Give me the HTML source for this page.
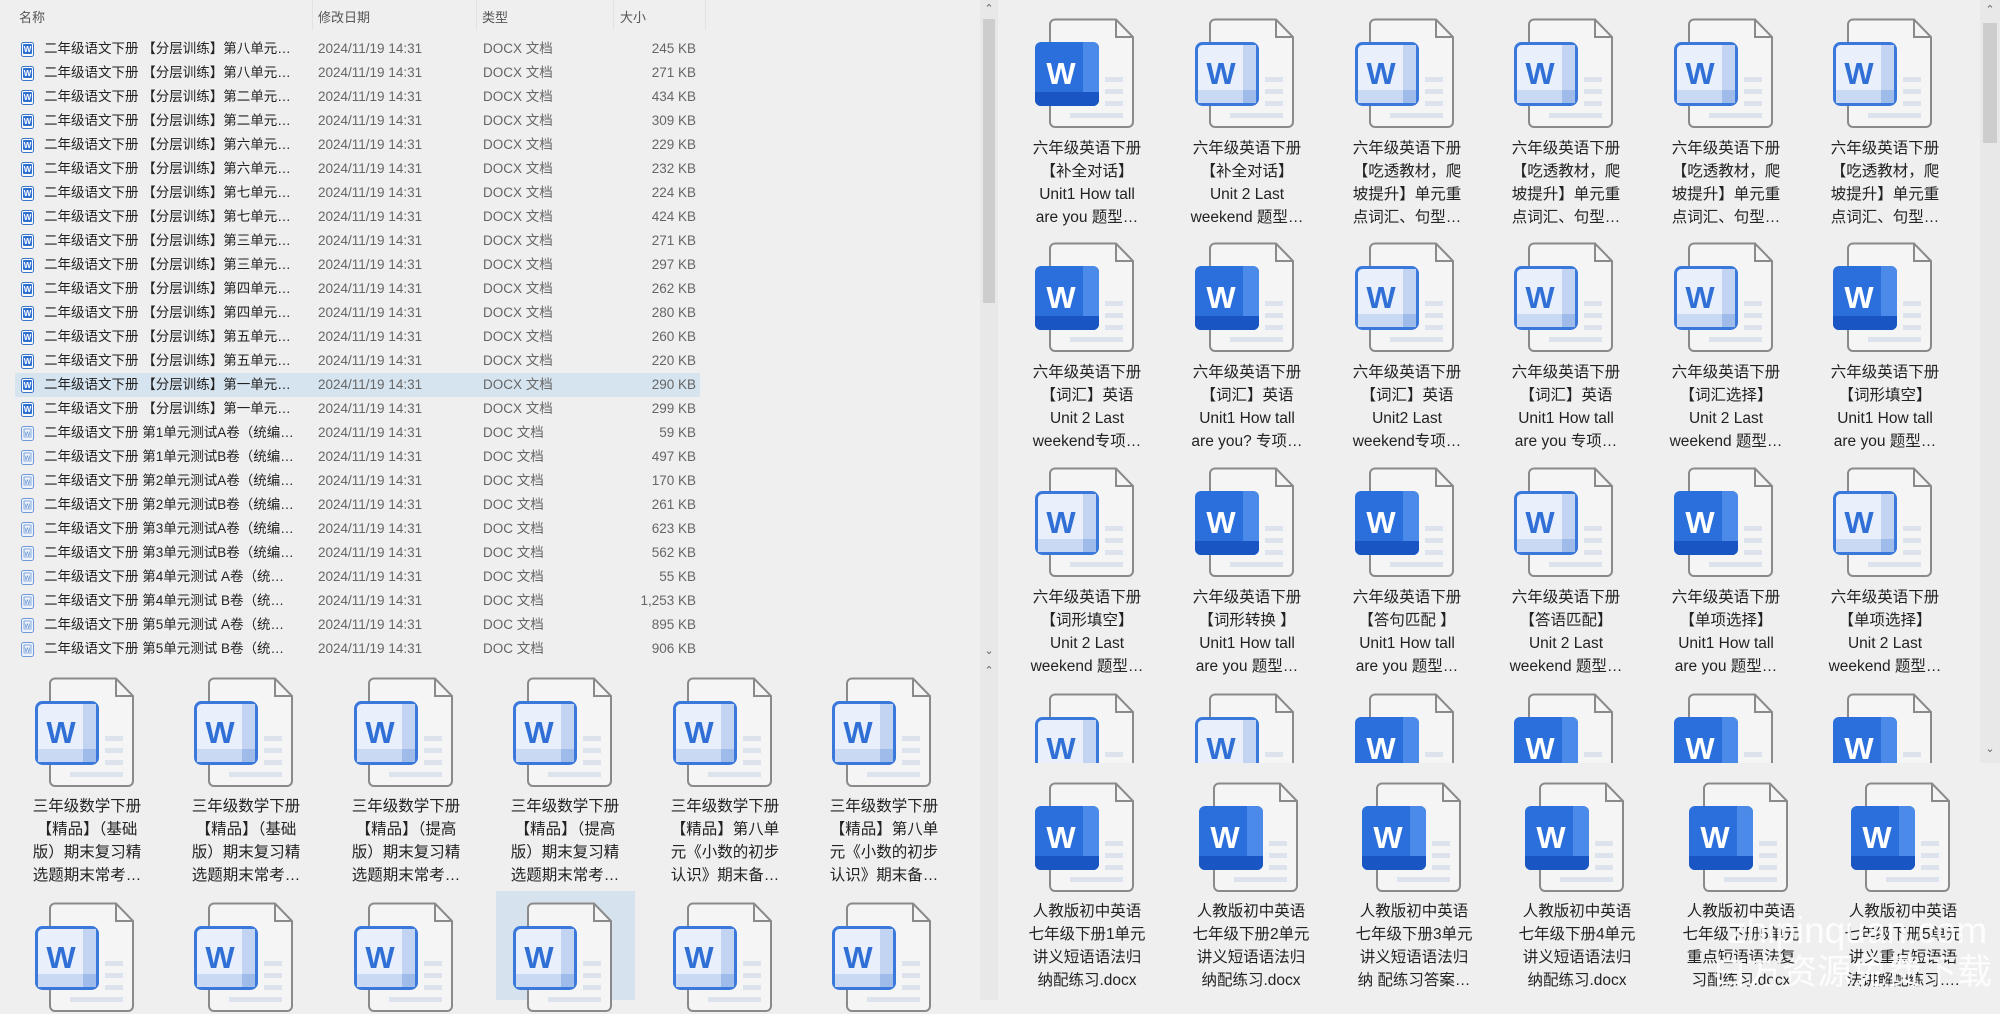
<!DOCTYPE html>
<html><head><meta charset="utf-8">
<style>
*{margin:0;padding:0;box-sizing:border-box}
body{width:2000px;height:1000px;background:#efefef;position:relative;overflow:hidden;font-family:"Liberation Sans","Noto Sans CJK SC",sans-serif}
.a{position:absolute;white-space:nowrap}
.hd{font-size:13px;color:#555;top:7px}
.sep{position:absolute;top:0;width:1px;height:30px;background:#e2e2e2}
.row{position:absolute;left:0;height:24px;font-size:13.5px;line-height:24px}
.row span{position:absolute;white-space:nowrap}
.nm{left:44px;color:#222}
.dt{left:318px;color:#666}
.tp{left:483px;color:#666}
.sz{color:#666;text-align:right;width:80px;left:616px}
.si{position:absolute;left:21px;top:5px;width:13px;height:15px}
.lbl{position:absolute;width:140px;text-align:center;font-size:15.5px;line-height:23px;color:#222;white-space:nowrap}
.ic{position:absolute;width:100px;height:112px}
.sb{position:absolute;background:#e8e8e8}
.th{position:absolute;background:#cdcdcd}
.ar{position:absolute;font-size:11px;color:#666;width:18px;text-align:center}
</style></head><body>
<div id="root"></div>
<div class="sb" style="left:980px;top:0;width:18px;height:660px"></div>
<div class="th" style="left:983px;top:19px;width:12px;height:284px"></div>
<div class="ar" style="left:980px;top:2px">&#8963;</div>
<div class="ar" style="left:980px;top:644px">&#8964;</div>
<div class="sb" style="left:980px;top:660px;width:18px;height:340px"></div>
<div class="ar" style="left:980px;top:664px">&#8963;</div>
<div class="sb" style="left:1980px;top:0;width:20px;height:763px"></div>
<div class="th" style="left:1983px;top:23px;width:14px;height:120px"></div>
<div class="ar" style="left:1981px;top:3px">&#8963;</div>
<div class="ar" style="left:1981px;top:742px">&#8964;</div>
<div class="a" style="left:1728px;top:910px;font-size:37px;color:rgba(255,255,255,.88)">zhipinquan.com</div>
<div class="a" style="left:1712px;top:953px;font-size:35px;line-height:40px;color:rgba(255,255,255,.88)">白方资源免费下载</div>
<script>
const R=document.getElementById('root');let h='';
h+='<div class="a hd" style="left:19px">名称</div><div class="a" style="left:157px;top:-6px;font-size:12px;color:#888">&#8963;</div>';
h+='<div class="a hd" style="left:318px">修改日期</div><div class="a hd" style="left:482px">类型</div><div class="a hd" style="left:620px">大小</div>';
[312,476,613,705].forEach(x=>h+='<div class="sep" style="left:'+x+'px"></div>');
const u=['第八单元…','第八单元…','第二单元…','第二单元…','第六单元…','第六单元…','第七单元…','第七单元…','第三单元…','第三单元…','第四单元…','第四单元…','第五单元…','第五单元…','第一单元…','第一单元…'];
const s1=[245,271,434,309,229,232,224,424,271,297,262,280,260,220,290,299];
const d=['第1单元测试A卷（统编…','第1单元测试B卷（统编…','第2单元测试A卷（统编…','第2单元测试B卷（统编…','第3单元测试A卷（统编…','第3单元测试B卷（统编…','第4单元测试 A卷（统…','第4单元测试 B卷（统…','第5单元测试 A卷（统…','第5单元测试 B卷（统…'];
const s2=['59','497','170','261','623','562','55','1,253','895','906'];
for(let i=0;i<26;i++){
 const y=37+i*24;const docx=i<16;
 const nm=docx?'二年级语文下册 【分层训练】'+u[i]:'二年级语文下册 '+d[i-16];
 const sz=(docx?s1[i]:s2[i-16])+' KB';
 const ic=docx?'<svg class="si" viewBox="0 0 13 15"><rect x="0.5" y="0.5" width="12" height="14" rx="2" fill="#fff" stroke="#3a74c9"/><rect x="2" y="2" width="9" height="10" rx="1" fill="#2f6fd0"/><text x="6.5" y="10" font-size="8" font-weight="bold" fill="#fff" text-anchor="middle" font-family="Liberation Sans">W</text></svg>'
 :'<svg class="si" viewBox="0 0 13 15"><rect x="0.5" y="0.5" width="12" height="14" rx="2" fill="#eef3fb" stroke="#6f9ad8"/><rect x="3" y="3" width="7" height="8" fill="none" stroke="#6f9ad8" stroke-width=".8"/><text x="6.5" y="10" font-size="6" fill="#3a74c9" text-anchor="middle" font-family="Liberation Sans">W</text></svg>';
 if(i==14)h+='<div style="position:absolute;left:15px;top:'+y+'px;width:685px;height:24px;background:#d6e4f0"></div>';
 h+='<div class="row" style="top:'+y+'px;width:700px">'+ic+'<span class="nm">'+nm+'</span><span class="dt">2024/11/19 14:31</span><span class="tp">'+(docx?'DOCX 文档':'DOC 文档')+'</span><span class="sz">'+sz+'</span></div>';
}
function icon(cx,top,solid,clip){
 let s='<svg class="ic" style="left:'+(cx-52)+'px;top:'+top+'px'+(clip?';height:'+clip+'px':'')+'" viewBox="0 0 100 '+(clip||112)+'" preserveAspectRatio="xMinYMin slice">';
 s+='<path d="M20 1.5 H81 L98 19 V104 a5 5 0 0 1 -5 5 H20 a5 5 0 0 1 -5 -5 V6.5 a5 5 0 0 1 5 -5Z" fill="#f5f5f5" stroke="#8a8a8a" stroke-width="2"/><path d="M81 1.5 V19 H98" fill="none" stroke="#8a8a8a" stroke-width="2"/>';
 s+='<rect x="70" y="59" width="18" height="5" fill="#dde3ec"/><rect x="70" y="71" width="18" height="5" fill="#dde3ec"/><rect x="70" y="83" width="18" height="5" fill="#dde3ec"/><rect x="35" y="95" width="53" height="5" fill="#dde3ec"/>';
 if(solid){
  s+='<rect x="0" y="24" width="64" height="64" rx="6" fill="#2a6fdb"/><path d="M48 24 H58 a6 6 0 0 1 6 6 V82 a6 6 0 0 1 -6 6 H48Z" fill="#4b8ae8"/><path d="M0 74 H64 V82 a6 6 0 0 1 -6 6 H6 a6 6 0 0 1 -6 -6Z" fill="#1a55c4"/><text x="26" y="66" font-size="31" font-weight="bold" fill="#fff" text-anchor="middle" font-family="Liberation Sans">W</text>';
 }else{
  s+='<rect x="1.5" y="25.5" width="61" height="61" rx="6" fill="#eaf0fb" stroke="#3a78dc" stroke-width="3"/><rect x="48" y="27" width="13" height="58" fill="#c3d4f2"/><rect x="3" y="72" width="58" height="13" fill="#c9d8f3"/><rect x="48" y="72" width="13" height="13" fill="#9fbbe9"/><text x="26" y="66" font-size="31" font-weight="bold" fill="#2f6fd6" text-anchor="middle" font-family="Liberation Sans">W</text>';
 }
 return s+'</svg>';
}
function lbl(cx,top,lines){let s='<div class="lbl" style="left:'+(cx-70)+'px;top:'+top+'px">';lines.forEach(l=>s+='<div>'+l+'</div>');return s+'</div>';}
const lc=[87,246,406,565,725,884];
h+='<div style="position:absolute;left:496px;top:891px;width:139px;height:109px;background:#d6e2ee"></div>';
const LL=[['三年级数学下册','【精品】（基础','版）期末复习精','选题期末常考…'],['三年级数学下册','【精品】（基础','版）期末复习精','选题期末常考…'],['三年级数学下册','【精品】（提高','版）期末复习精','选题期末常考…'],['三年级数学下册','【精品】（提高','版）期末复习精','选题期末常考…'],['三年级数学下册','【精品】第八单','元《小数的初步','认识》期末备…'],['三年级数学下册','【精品】第八单','元《小数的初步','认识》期末备…']];
lc.forEach((c,i)=>{h+=icon(c,677,false)+lbl(c,795,LL[i])+icon(c,902,false);});
const rc=[1087,1247,1407,1566,1726,1885];
const st=[[1,0,0,0,0,0],[1,1,0,0,0,1],[0,1,1,0,1,0],[0,0,1,1,1,1]];
const tops=[18,242,467,693];
const RL=[
[['六年级英语下册','【补全对话】','Unit1 How tall','are you 题型…'],['六年级英语下册','【补全对话】','Unit 2 Last','weekend 题型…'],['六年级英语下册','【吃透教材，爬','坡提升】单元重','点词汇、句型…'],['六年级英语下册','【吃透教材，爬','坡提升】单元重','点词汇、句型…'],['六年级英语下册','【吃透教材，爬','坡提升】单元重','点词汇、句型…'],['六年级英语下册','【吃透教材，爬','坡提升】单元重','点词汇、句型…']],
[['六年级英语下册','【词汇】英语','Unit 2 Last','weekend专项…'],['六年级英语下册','【词汇】英语','Unit1 How tall','are you? 专项…'],['六年级英语下册','【词汇】英语','Unit2 Last','weekend专项…'],['六年级英语下册','【词汇】英语','Unit1 How tall','are you 专项…'],['六年级英语下册','【词汇选择】','Unit 2 Last','weekend 题型…'],['六年级英语下册','【词形填空】','Unit1 How tall','are you 题型…']],
[['六年级英语下册','【词形填空】','Unit 2 Last','weekend 题型…'],['六年级英语下册','【词形转换 】','Unit1 How tall','are you 题型…'],['六年级英语下册','【答句匹配 】','Unit1 How tall','are you 题型…'],['六年级英语下册','【答语匹配】','Unit 2 Last','weekend 题型…'],['六年级英语下册','【单项选择】','Unit1 How tall','are you 题型…'],['六年级英语下册','【单项选择】','Unit 2 Last','weekend 题型…']]];
for(let r=0;r<4;r++)rc.forEach((c,i)=>{h+=icon(c,tops[r],st[r][i],r==3?70:0);if(r<3)h+=lbl(c,tops[r]+119,RL[r][i]);});
const bc=[1087,1251,1414,1577,1741,1903];
const BL=[['人教版初中英语','七年级下册1单元','讲义短语语法归','纳配练习.docx'],['人教版初中英语','七年级下册2单元','讲义短语语法归','纳配练习.docx'],['人教版初中英语','七年级下册3单元','讲义短语语法归','纳 配练习答案…'],['人教版初中英语','七年级下册4单元','讲义短语语法归','纳配练习.docx'],['人教版初中英语','七年级下册5单元','重点短语语法复','习配练习.docx'],['人教版初中英语','七年级下册5单元','讲义重点短语语','法讲解配练习….']];
bc.forEach((c,i)=>{h+=icon(c,782,true)+lbl(c,900,BL[i]);});
R.innerHTML=h;
</script>
</body></html>
